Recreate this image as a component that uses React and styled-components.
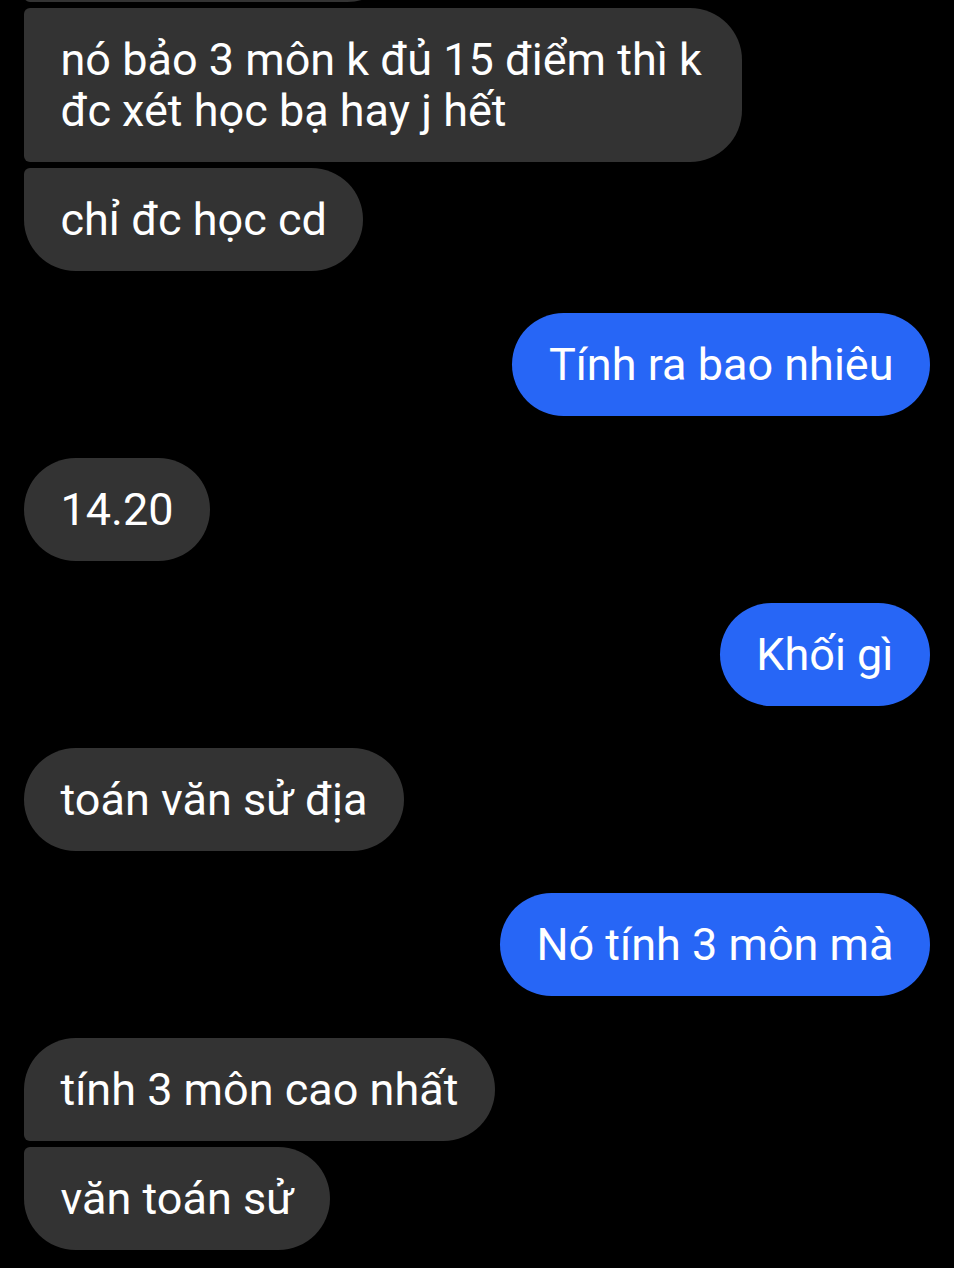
import React from 'react';
import styled, { createGlobalStyle, css } from 'styled-components';

const GlobalStyle = createGlobalStyle`
  html, body {
    margin: 0;
    padding: 0;
    background: #000;
  }
  body {
    font-family: Roboto, "Noto Sans", "Liberation Sans", sans-serif;
    -webkit-font-smoothing: antialiased;
  }
`;

const COLORS = {
  incoming: '#333333',
  outgoing: '#2766f6',
  text: '#ffffff',
};

const BIG = '52px';
const SMALL = '6px';

// each message: who sent it, and where it sits in a run of messages by the same sender
const messages = [
  { id: 0, mine: false, pos: 'middle', text: 'ừ thì nó nói vậy' },
  { id: 1, mine: false, pos: 'middle', text: 'nó bảo 3 môn k đủ 15 điểm thì k đc xét học bạ hay j hết' },
  { id: 2, mine: false, pos: 'last', text: 'chỉ đc học cd' },
  { id: 3, mine: true, pos: 'single', text: 'Tính ra bao nhiêu' },
  { id: 4, mine: false, pos: 'single', text: '14.20' },
  { id: 5, mine: true, pos: 'single', text: 'Khối gì' },
  { id: 6, mine: false, pos: 'single', text: 'toán văn sử địa' },
  { id: 7, mine: true, pos: 'single', text: 'Nó tính 3 môn mà' },
  { id: 8, mine: false, pos: 'first', text: 'tính 3 môn cao nhất' },
  { id: 9, mine: false, pos: 'last', text: 'văn toán sử' },
];

const App = () => {
  return (
    <>
      <GlobalStyle />
      <Screen>
        <Thread>
          {messages.map((m, i) => {
            const prev = messages[i - 1];
            const sameRun = prev && prev.mine === m.mine && (prev.pos === 'first' || prev.pos === 'middle');
            return (
              <Row key={m.id} mine={m.mine} tight={sameRun} first={i === 0}>
                <Bubble mine={m.mine} pos={m.pos}>{m.text}</Bubble>
              </Row>
            );
          })}
        </Thread>
      </Screen>
    </>
  );
};

const Screen = styled.div`
  width: 954px;
  height: 1268px;
  overflow: hidden;
  background: #000;
`;

// the thread is scrolled, so the bubble before the first full one sits mostly above the top edge
const Thread = styled.div`
  display: flex;
  flex-direction: column;
  padding: 0 24px;
  margin-top: -101px;
`;

const Row = styled.div`
  display: flex;
  justify-content: ${p => (p.mine ? 'flex-end' : 'flex-start')};
  margin-top: ${p => (p.first ? '0' : p.tight ? '6px' : '42px')};
`;

const radii = (mine, pos) => {
  const top = pos === 'middle' || pos === 'last' ? SMALL : BIG;
  const bottom = pos === 'middle' || pos === 'first' ? SMALL : BIG;
  return mine
    ? css`border-radius: ${BIG} ${top} ${bottom} ${BIG};`
    : css`border-radius: ${top} ${BIG} ${BIG} ${bottom};`;
};

const Bubble = styled.div`
  max-width: 645px;
  padding: 26px 36.5px;
  font-size: 45px;
  line-height: 51px;
  color: ${COLORS.text};
  background: ${p => (p.mine ? COLORS.outgoing : COLORS.incoming)};
  ${p => radii(p.mine, p.pos)}
`;

export default App;
